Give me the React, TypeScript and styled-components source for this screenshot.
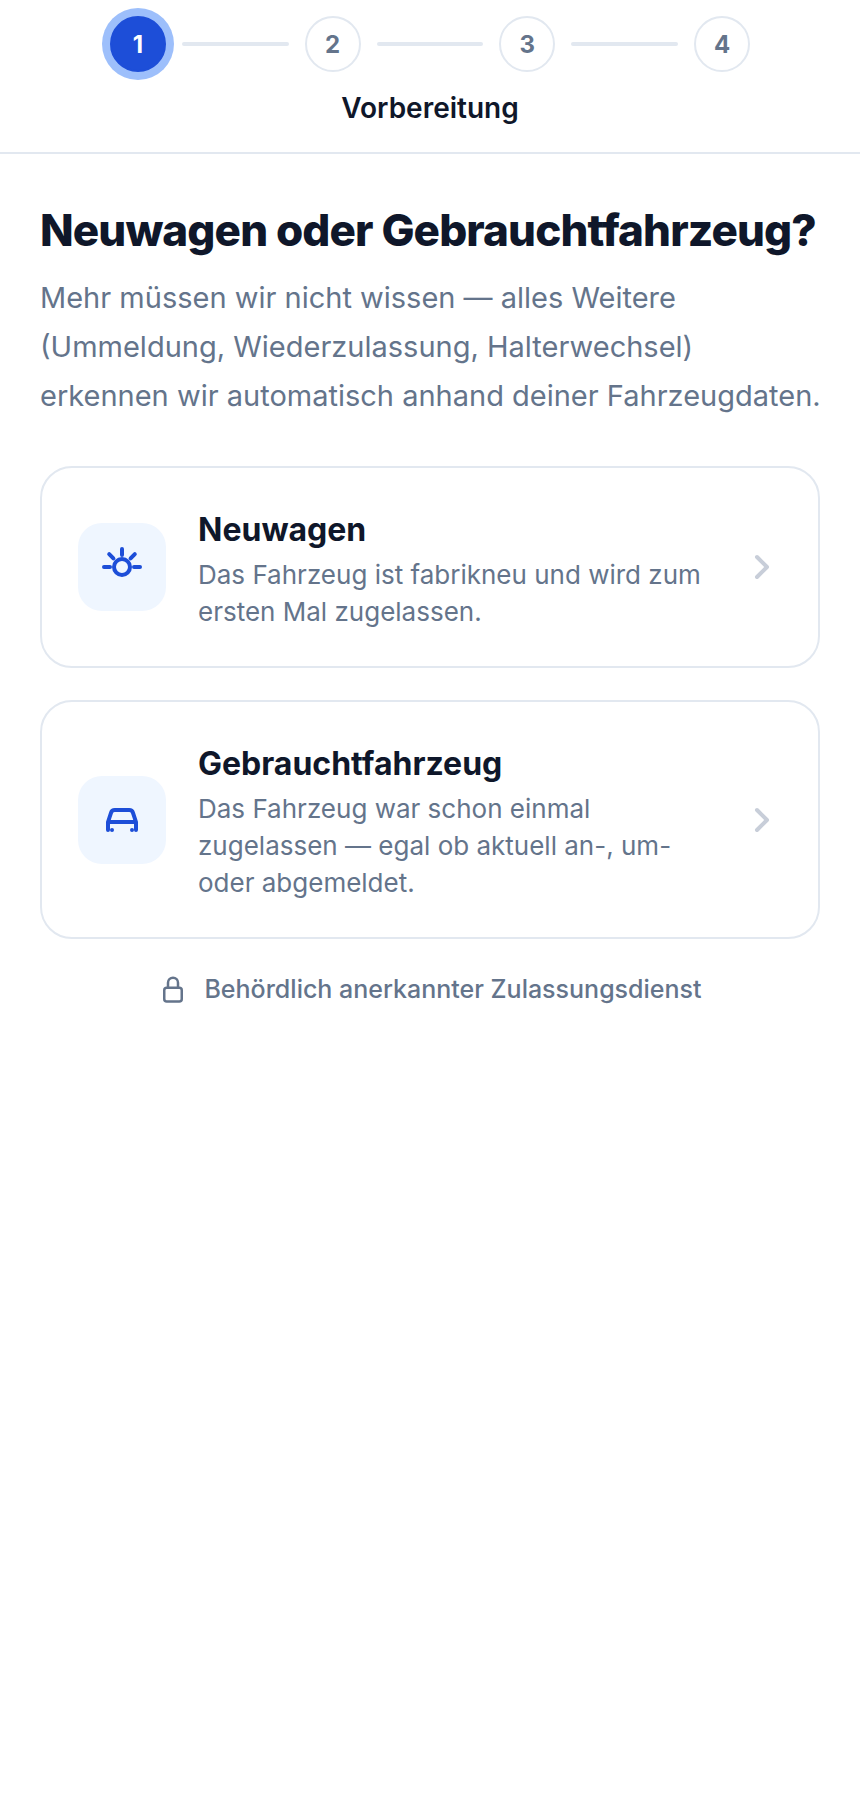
import React, { useState } from 'react'
import styled, { createGlobalStyle } from 'styled-components'

const colors = {
  primary: '#1d4ed8',
  primaryRing: '#9dbffb',
  primaryLight: '#eff6ff',
  heading: '#0f172a',
  text: '#64748b',
  border: '#e2e8f0',
  chevron: '#c8ced9',
}

const steps = ['Vorbereitung', 'Fahrzeug', 'Halter', 'Abschluss']

const SunIcon = () => (
  <Icon size={48} viewBox='0 0 24 24' strokeWidth={2} aria-hidden='true'>
    <circle cx='12' cy='12' r='4' />
    <path d='M12 3v3M3 12h3M18 12h3M5.6 5.6l2.1 2.1M18.4 5.6l-2.1 2.1' />
  </Icon>
)

const CarIcon = () => (
  <Icon size={48} viewBox='0 0 24 24' strokeWidth={2} aria-hidden='true'>
    <path d='M5 17v-4l1.5-4.6A2 2 0 0 1 8.4 7h7.2a2 2 0 0 1 1.9 1.4L19 13v4M5 13h14M7 17h.01M17 17h.01' />
  </Icon>
)

const ChevronIcon = () => (
  <Icon size={40} viewBox='0 0 24 24' strokeWidth={2.4} aria-hidden='true'>
    <path d='m9 18 6-6-6-6' />
  </Icon>
)

const LockIcon = () => (
  <Icon size={30} viewBox='0 0 24 24' strokeWidth={2} aria-hidden='true'>
    <rect x='5' y='11' width='14' height='11' rx='2' />
    <path d='M8 11V7a4 4 0 0 1 8 0v4' />
  </Icon>
)

const options = [
  {
    id: 'new',
    title: 'Neuwagen',
    description: 'Das Fahrzeug ist fabrikneu und wird zum ersten Mal zugelassen.',
    icon: <SunIcon />,
  },
  {
    id: 'used',
    title: 'Gebrauchtfahrzeug',
    description: 'Das Fahrzeug war schon einmal zugelassen — egal ob aktuell an-, um- oder abgemeldet.',
    icon: <CarIcon />,
  },
]

const App = () => {

  const [step] = useState(0)

  return (
    <>
      <GlobalStyle />
      <Header>
        <Stepper>
          {
            steps.map((name, i) => (
              <React.Fragment key={name}>
                { i > 0 && <StepLine aria-hidden='true' /> }
                <Step $active={i === step} aria-current={i === step ? 'step' : undefined}>{i + 1}</Step>
              </React.Fragment>
            ))
          }
        </Stepper>
        <StepName>{steps[step]}</StepName>
      </Header>
      <Main>
        <Intro>
          <Title>Neuwagen oder Gebrauchtfahrzeug?</Title>
          <Subtitle>
            Mehr müssen wir nicht wissen — alles Weitere (Ummeldung, Wiederzulassung, Halterwechsel) erkennen wir automatisch anhand deiner Fahrzeugdaten.
          </Subtitle>
        </Intro>
        <Options>
          {
            options.map(option => (
              <OptionCard key={option.id} type='button'>
                <IconTile>{option.icon}</IconTile>
                <OptionText>
                  <OptionTitle>{option.title}</OptionTitle>
                  <OptionDescription>{option.description}</OptionDescription>
                </OptionText>
                <Chevron><ChevronIcon /></Chevron>
              </OptionCard>
            ))
          }
        </Options>
        <Trust>
          <LockIcon />
          <span>Behördlich anerkannter Zulassungsdienst</span>
        </Trust>
      </Main>
    </>
  )
}

const GlobalStyle = createGlobalStyle`
  * {
    box-sizing: border-box;
  }

  body {
    margin: 0;
    background: #ffffff;
    color: ${colors.heading};
    font-family: Inter, 'Liberation Sans', sans-serif;
  }
`

const Icon = styled.svg<{ size: number }>`
  display: block;
  flex-shrink: 0;
  width: ${props => props.size}px;
  height: ${props => props.size}px;
  fill: none;
  stroke: currentColor;
  stroke-linecap: round;
  stroke-linejoin: round;
`

const Header = styled.header`
  display: flex;
  flex-direction: column;
  align-items: center;
  padding: 16px 40px 28px;
  border-bottom: 2px solid ${colors.border};
`

const Stepper = styled.div`
  display: flex;
  align-items: center;
  gap: 16px;
  width: 100%;
  max-width: 640px;
`

const Step = styled.div<{ $active: boolean }>`
  display: flex;
  align-items: center;
  justify-content: center;
  flex-shrink: 0;
  width: 56px;
  height: 56px;
  border-radius: 50%;
  border: 2px solid ${props => props.$active ? colors.primary : colors.border};
  background: ${props => props.$active ? colors.primary : '#ffffff'};
  box-shadow: ${props => props.$active ? `0 0 0 8px ${colors.primaryRing}` : 'none'};
  color: ${props => props.$active ? '#ffffff' : colors.text};
  font-size: 24px;
  font-weight: 700;
`

const StepLine = styled.div`
  flex: 1;
  height: 4px;
  border-radius: 2px;
  background: ${colors.border};
`

const StepName = styled.div`
  margin-top: 20px;
  font-size: 28px;
  font-weight: 600;
  line-height: 32px;
`

const Main = styled.main`
  padding: 48px 40px;
`

const Intro = styled.div`
  margin-right: -8px;
`

const Title = styled.h1`
  margin: 0;
  font-size: 44px;
  font-weight: 800;
  line-height: 56px;
  letter-spacing: -0.02em;
`

const Subtitle = styled.p`
  margin: 15px 0 0;
  color: ${colors.text};
  font-size: 29px;
  line-height: 49px;
`

const Options = styled.div`
  display: flex;
  flex-direction: column;
  gap: 32px;
  margin-top: 46px;
`

const OptionCard = styled.button`
  display: flex;
  align-items: center;
  gap: 32px;
  width: 100%;
  padding: 36px;
  border: 2px solid ${colors.border};
  border-radius: 32px;
  background: #ffffff;
  color: inherit;
  font: inherit;
  text-align: left;
  cursor: pointer;
`

const IconTile = styled.span`
  display: flex;
  align-items: center;
  justify-content: center;
  flex-shrink: 0;
  width: 88px;
  height: 88px;
  border-radius: 24px;
  background: ${colors.primaryLight};
  color: ${colors.primary};
`

const OptionText = styled.span`
  display: flex;
  flex: 1;
  flex-direction: column;
  gap: 6px;
  padding-top: 6px;
`

const OptionTitle = styled.span`
  font-size: 32px;
  font-weight: 700;
  line-height: 40px;
`

const OptionDescription = styled.span`
  color: ${colors.text};
  font-size: 26px;
  line-height: 37px;
`

const Chevron = styled.span`
  color: ${colors.chevron};
`

const Trust = styled.div`
  display: flex;
  align-items: center;
  justify-content: center;
  gap: 16px;
  margin-top: 32px;
  color: ${colors.text};
  font-size: 25px;
  font-weight: 500;
  line-height: 36px;
`

export default App
